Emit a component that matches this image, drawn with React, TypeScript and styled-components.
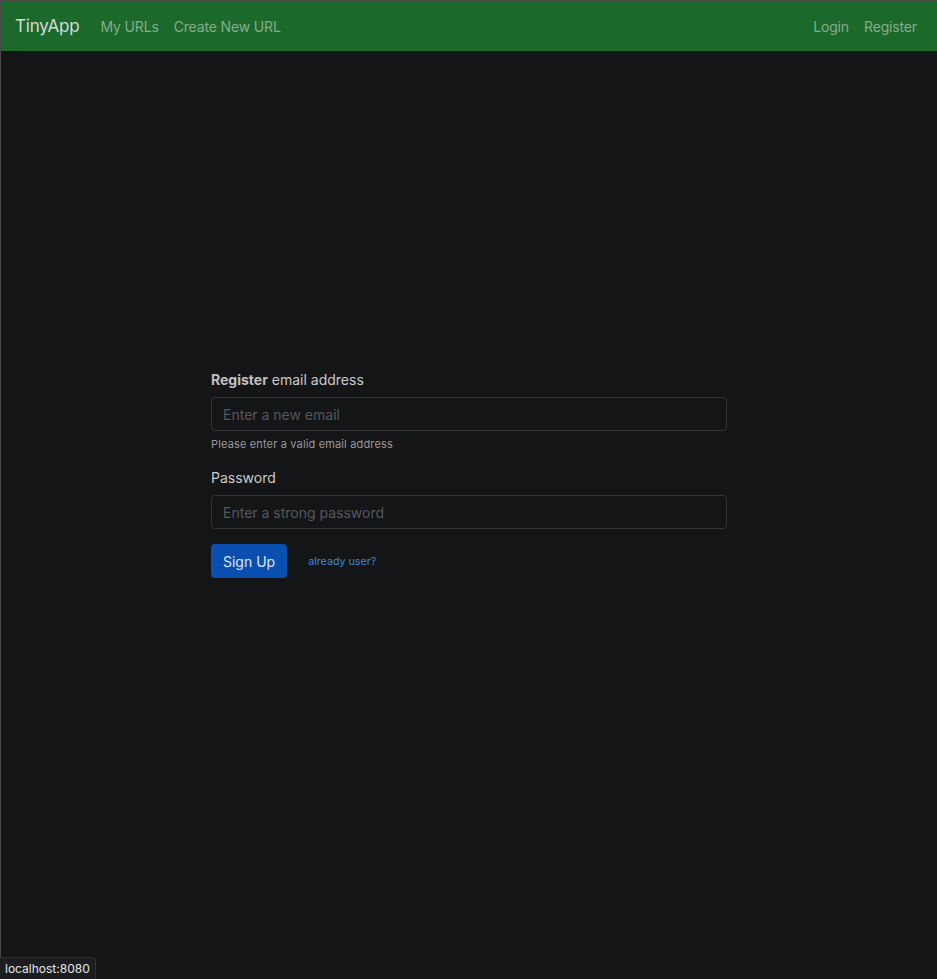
import React from "react";
import styled, { createGlobalStyle } from "styled-components";

const Global = createGlobalStyle`
  html, body { margin: 0; padding: 0; height: 100%; }
  body {
    background: #141517;
    font-family: Inter, "Noto Sans", "Liberation Sans", sans-serif;
    -webkit-font-smoothing: antialiased;
  }
  * { box-sizing: border-box; }
`;

const Page = styled.div`
  min-height: 979px;
  border-top: 1px solid #4a4a4a;
  border-left: 1px solid #4a4a4a;
  background: #141517;
  display: flex;
  flex-direction: column;
`;

const Navbar = styled.nav`
  height: 50px;
  background: #1b6a2b;
  display: flex;
  align-items: center;
  padding: 0 20px 0 14px;
`;

const Brand = styled.a`
  font-size: 17px;
  color: #d8d8d8;
  margin-right: 21px;
  letter-spacing: -0.2px;
`;

const NavGroup = styled.div<{ $right?: boolean }>`
  display: flex;
  gap: 15px;
  margin-left: ${(p) => (p.$right ? "auto" : "0")};
`;

const NavLink = styled.a`
  font-size: 14px;
  color: #88ab8f;
  letter-spacing: -0.15px;
`;

const Main = styled.main`
  flex: 1;
  display: flex;
  justify-content: center;
  padding-top: 320px;
`;

const Form = styled.form`
  width: 516px;
  display: flex;
  flex-direction: column;
`;

const Label = styled.label`
  font-size: 14px;
  color: #cbcbcb;
  margin-bottom: 8px;
  line-height: 18px;
  b { font-weight: 700; color: #c0c0c0; }
`;

const Input = styled.input`
  height: 34px;
  background: #141517;
  border: 1px solid #323438;
  border-radius: 4px;
  padding: 0 11px;
  font-size: 14px;
  font-family: inherit;
  color: #ddd;
  outline: none;
  &::placeholder { color: #55575b; }
`;

const Help = styled.small`
  font-size: 11px;
  letter-spacing: 0.15px;
  color: #9a9a9a;
  margin-top: 6px;
  margin-bottom: 18px;
  line-height: 14px;
`;

const Actions = styled.div`
  display: flex;
  align-items: center;
  gap: 21px;
  margin-top: 15px;
`;

const Button = styled.button`
  height: 34px;
  padding: 0 12px;
  background: #0a4fb0;
  border: none;
  border-radius: 4px;
  color: #dfe6f2;
  font-size: 14px;
  font-family: inherit;
`;

const SmallLink = styled.a`
  font-size: 10.7px;
  color: #3d86d8;
`;

const StatusTip = styled.div`
  position: fixed;
  left: 0;
  bottom: 0;
  padding: 3px 5px 2px 5px;
  background: #1c1d20;
  border-top: 1px solid #2e2f33;
  border-right: 1px solid #2e2f33;
  border-top-right-radius: 4px;
  color: #e6e6e6;
  font-size: 12px;
  line-height: 16px;
`;

export default function App() {
  return (
    <>
      <Global />
      <Page>
        <Navbar>
          <Brand>TinyApp</Brand>
          <NavGroup>
            <NavLink>My URLs</NavLink>
            <NavLink>Create New URL</NavLink>
          </NavGroup>
          <NavGroup $right>
            <NavLink>Login</NavLink>
            <NavLink>Register</NavLink>
          </NavGroup>
        </Navbar>
        <Main>
          <Form onSubmit={(e) => e.preventDefault()}>
            <Label>
              <b>Register</b> email address
            </Label>
            <Input type="email" placeholder="Enter a new email" />
            <Help>Please enter a valid email address</Help>
            <Label>Password</Label>
            <Input type="password" placeholder="Enter a strong password" />
            <Actions>
              <Button type="submit">Sign Up</Button>
              <SmallLink>already user?</SmallLink>
            </Actions>
          </Form>
        </Main>
      </Page>
      <StatusTip>localhost:8080</StatusTip>
    </>
  );
}
